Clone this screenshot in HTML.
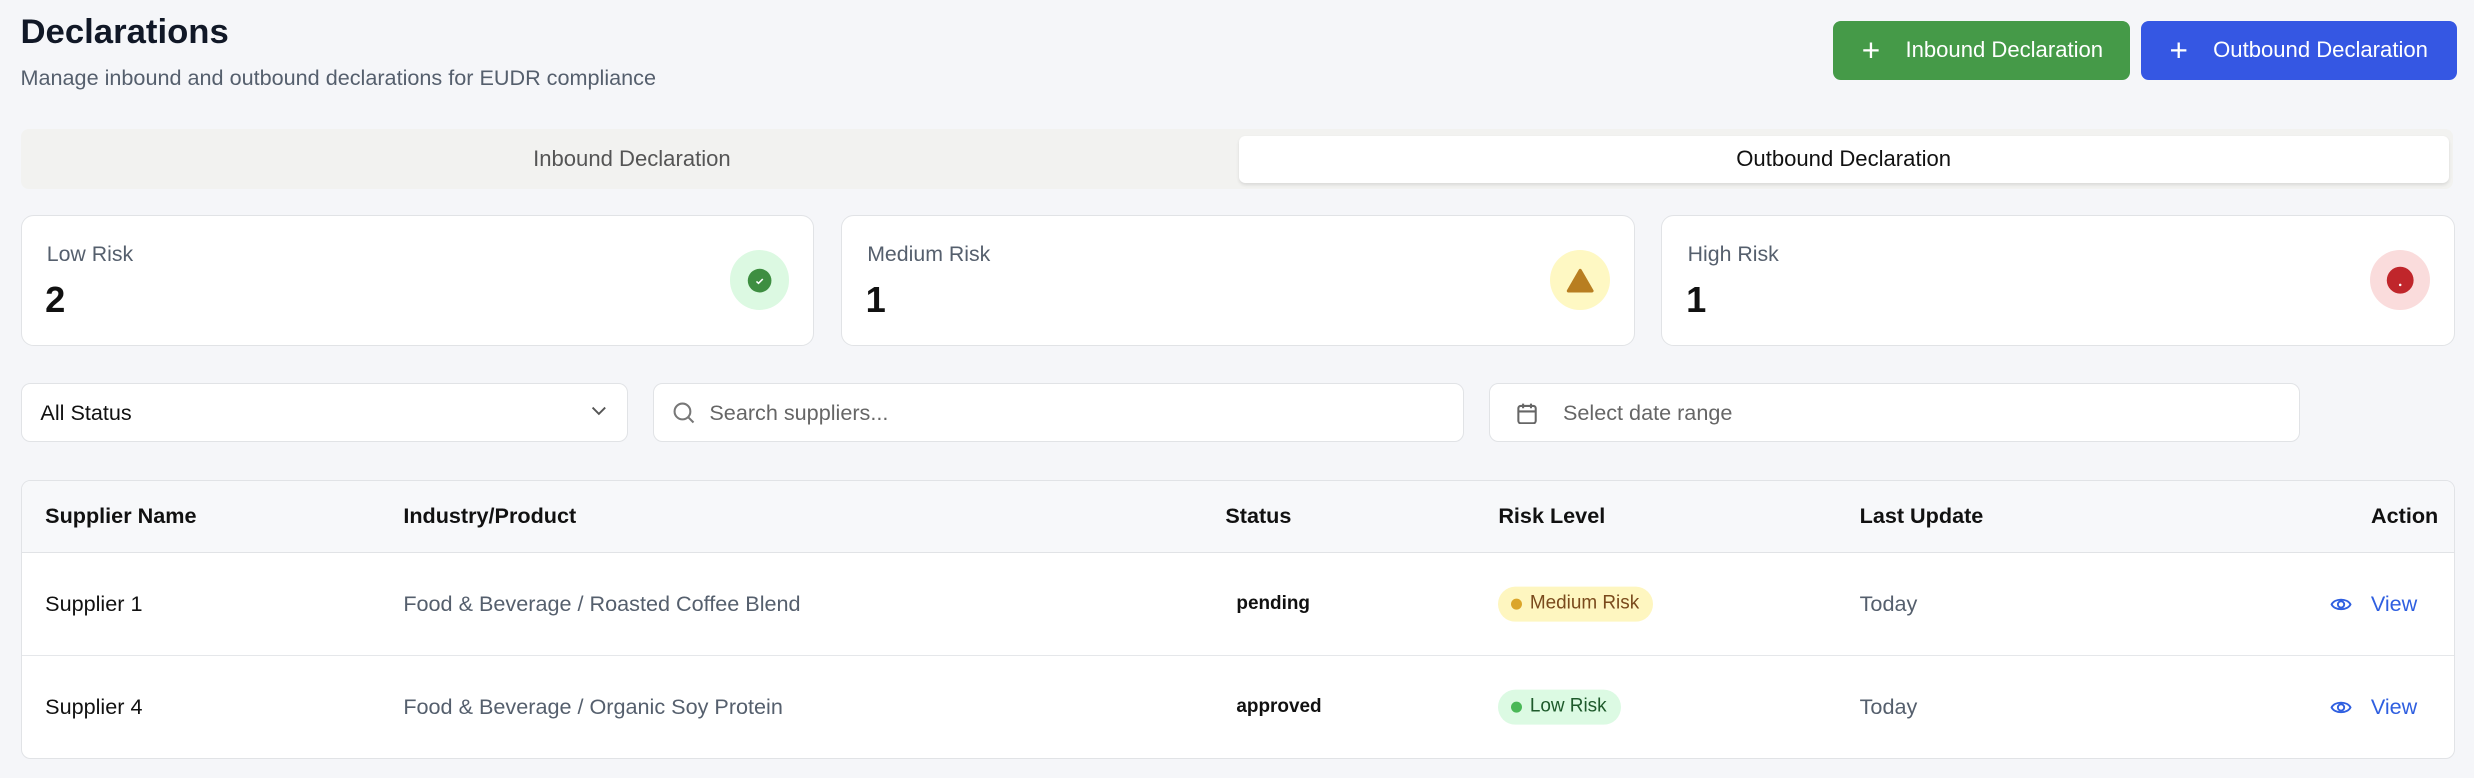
<!DOCTYPE html>
<html><head><meta charset="utf-8"><style>
html{zoom:1.5778}
*{box-sizing:border-box;margin:0;padding:0}
body{width:1568px;height:493px;background:#f5f6f9;font-family:"Liberation Sans",sans-serif;color:#111;position:relative;overflow:hidden}
.abs{position:absolute}
h1{position:absolute;left:13px;top:8px;font-size:22px;font-weight:bold;color:#111827}
.sub{left:13px;top:41px;font-size:13.7px;color:#555f6d}
.btn{top:13px;height:38px;border-radius:5px;color:#fff;font-size:14px;display:flex;align-items:center;padding-left:18px}
.btn span.p{font-size:20px;font-weight:300;margin-right:16px;line-height:1}
.tabs{left:13px;top:82px;width:1542px;height:38px;background:#f2f2f0;border-radius:5px}
.tab{top:86px;height:30px;display:flex;align-items:center;justify-content:center;font-size:14px}
.card{top:136px;width:503px;height:83px;background:#fff;border:1px solid #e1e3e6;border-radius:8px}
.card .l{position:absolute;left:16px;top:17px;font-size:13.5px;color:#555f6d}
.card .n{position:absolute;left:15px;top:40px;font-size:23px;font-weight:bold;color:#111}
.card .ic{position:absolute;right:15px;top:22px;width:38px;height:38px;border-radius:50%;display:flex;align-items:center;justify-content:center}
.inp{top:243px;height:37px;background:#fff;border:1px solid #e1e3e6;border-radius:6px;font-size:13.7px;display:flex;align-items:center}
.table{left:13px;top:304px;width:1543px;height:177px;background:#fff;border:1px solid #e1e3e6;border-radius:6px;overflow:hidden}
.hd{position:absolute;left:0;top:0;width:100%;height:46px;background:#f7f8fa;border-bottom:1px solid #e1e3e6}
.row{position:absolute;left:0;width:100%;height:65px;border-bottom:1px solid #e5e7ea}
.c{position:absolute;font-size:13.7px;top:50%;transform:translateY(-50%);white-space:nowrap}
.hd .c{font-weight:bold;color:#111}
.g{color:#555f6d}
.badge{display:flex;align-items:center;height:22px;padding:0 9px 0 8px;border-radius:11px;font-size:12px}
.badge i{width:7px;height:7px;border-radius:50%;margin-right:5px;display:inline-block}
.view{color:#2f5fe0;display:flex;align-items:center}
</style></head><body>
<h1>Declarations</h1>
<div class="abs sub">Manage inbound and outbound declarations for EUDR compliance</div>
<div class="abs btn" style="left:1162px;width:188px;background:#459a48"><span class="p">+</span>Inbound Declaration</div>
<div class="abs btn" style="left:1357px;width:200px;background:#3557e3"><span class="p">+</span>Outbound Declaration</div>

<div class="abs tabs"></div>
<div class="abs tab" style="left:16px;width:769px;color:#555">Inbound Declaration</div>
<div class="abs tab" style="left:785px;width:767px;background:#fff;border-radius:4px;box-shadow:0 1px 2px rgba(0,0,0,.1);color:#111">Outbound Declaration</div>

<div class="abs card" style="left:13px"><div class="l">Low Risk</div><div class="n">2</div><div class="ic" style="background:#dcf9e2"><svg width="16" height="16" viewBox="0 0 16 16"><circle cx="8" cy="8" r="7.5" fill="#3e8e41"/><path d="M6 8.5l1.3 1.2L10 7" stroke="#fff" stroke-width="1" fill="none"/></svg></div></div>
<div class="abs card" style="left:533px"><div class="l">Medium Risk</div><div class="n">1</div><div class="ic" style="background:#fef8c3"><svg width="18" height="16" viewBox="0 0 18 16"><path d="M9 1.5L16.5 14.5H1.5Z" fill="#b87e21" stroke="#b87e21" stroke-width="2" stroke-linejoin="round"/></svg></div></div>
<div class="abs card" style="left:1053px"><div class="l">High Risk</div><div class="n">1</div><div class="ic" style="background:#fadcdc"><svg width="18" height="18" viewBox="0 0 18 18"><circle cx="9" cy="9" r="8.5" fill="#c0262b"/><circle cx="9" cy="12" r=".8" fill="#fff"/></svg></div></div>

<div class="abs inp" style="left:13px;width:385px;padding-left:12px;color:#111">All Status<svg class="abs" style="right:13px;top:14px" width="10" height="7" viewBox="0 0 10 7"><path d="M1 1l4 4 4-4" stroke="#555" stroke-width="1.2" fill="none"/></svg></div>
<div class="abs inp" style="left:414px;width:514px;padding-left:12px;color:#666"><svg width="14" height="14" viewBox="0 0 14 14" style="margin-right:9px"><circle cx="6" cy="6" r="5" stroke="#777" stroke-width="1.3" fill="none"/><path d="M9.7 9.7L13 13" stroke="#777" stroke-width="1.3"/></svg>Search suppliers...</div>
<div class="abs inp" style="left:944px;width:514px;padding-left:16px;color:#666"><svg width="14" height="14" viewBox="0 0 14 14" style="margin-right:16px"><rect x="1.5" y="2.5" width="11" height="11" rx="1.5" stroke="#666" stroke-width="1.3" fill="none"/><path d="M1.5 6h11M4.5 1v3M9.5 1v3" stroke="#666" stroke-width="1.3"/></svg>Select date range</div>

<div class="abs table">
<div class="hd"><div class="c" style="left:15px">Supplier Name</div><div class="c" style="left:242px">Industry/Product</div><div class="c" style="left:763px">Status</div><div class="c" style="left:936px">Risk Level</div><div class="c" style="left:1165px">Last Update</div><div class="c" style="right:10px">Action</div></div>
<div class="row" style="top:46px"><div class="c" style="left:15px">Supplier 1</div><div class="c g" style="left:242px">Food &amp; Beverage / Roasted Coffee Blend</div><div class="c" style="left:770px;font-size:12px;font-weight:bold">pending</div><div class="c badge" style="left:936px;background:#fef6c0;color:#7a4a1c"><i style="background:#dba52a"></i>Medium Risk</div><div class="c g" style="left:1165px">Today</div><div class="c view" style="left:1463px"><svg width="14" height="12" viewBox="0 0 14 12" style="margin-right:12px"><path d="M1 6C3 2 11 2 13 6C11 10 3 10 1 6Z" stroke="#2f5fe0" stroke-width="1.2" fill="none"/><circle cx="7" cy="6" r="2" stroke="#2f5fe0" stroke-width="1.2" fill="none"/></svg>View</div></div>
<div class="row" style="top:111px;border-bottom:none"><div class="c" style="left:15px">Supplier 4</div><div class="c g" style="left:242px">Food &amp; Beverage / Organic Soy Protein</div><div class="c" style="left:770px;font-size:12px;font-weight:bold">approved</div><div class="c badge" style="left:936px;background:#dcfae3;color:#1e5a2b"><i style="background:#4ab857"></i>Low Risk</div><div class="c g" style="left:1165px">Today</div><div class="c view" style="left:1463px"><svg width="14" height="12" viewBox="0 0 14 12" style="margin-right:12px"><path d="M1 6C3 2 11 2 13 6C11 10 3 10 1 6Z" stroke="#2f5fe0" stroke-width="1.2" fill="none"/><circle cx="7" cy="6" r="2" stroke="#2f5fe0" stroke-width="1.2" fill="none"/></svg>View</div></div>
</div>
</body></html>
